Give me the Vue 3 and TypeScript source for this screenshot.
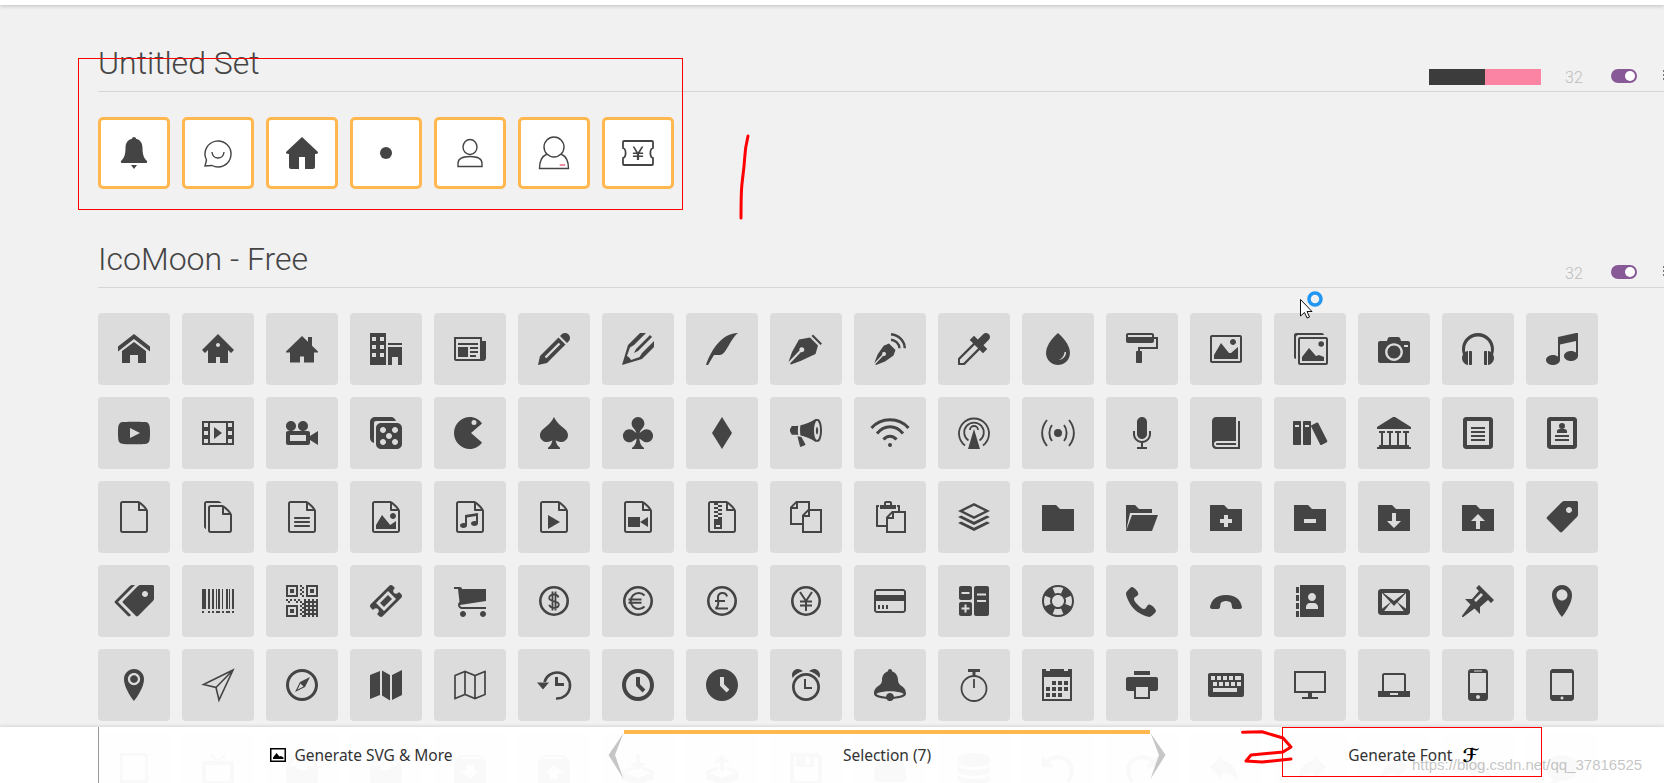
<script setup lang="ts">
interface Ico {
  f?: string
  s?: string
  w?: number
}

const F = (f: string, s?: string, w?: number): Ico => ({ f, s, w })
const S = (s: string, w = 2): Ico => ({ s, w })

const sheet =
  'M28.681 7.159c-0.694-0.947-1.662-2.053-2.724-3.116s-2.169-2.030-3.116-2.724c-1.612-1.182-2.393-1.319-2.841-1.319h-15.5c-1.378 0-2.5 1.121-2.5 2.5v27c0 1.378 1.122 2.5 2.5 2.5h23c1.378 0 2.5-1.122 2.5-2.5v-19.5c0-0.448-0.137-1.23-1.319-2.841zM24.543 5.457c0.959 0.959 1.712 1.825 2.268 2.543h-4.811v-4.811c0.718 0.556 1.584 1.309 2.543 2.268zM28 29.5c0 0.271-0.229 0.5-0.5 0.5h-23c-0.271 0-0.5-0.229-0.5-0.5v-27c0-0.271 0.229-0.5 0.5-0.5 0 0 15.499-0 15.5 0v7c0 0.552 0.448 1 1 1h7v19.5z '
const tab = 'M18 8l-4-4h-14v26h32v-22h-14z'
const coin = 'M16 1a15 15 0 1 0 0 30a15 15 0 1 0 0-30z M16 3.6a12.4 12.4 0 1 1 0 24.8a12.4 12.4 0 1 1 0-24.8z'
const frame = 'M28 0h-24c-1.65 0-3 1.35-3 3v26c0 1.65 1.35 3 3 3h24c1.65 0 3-1.35 3-3v-26c0-1.65-1.35-3-3-3zM27 28h-22v-24h22v24z'

// bottom right block of the qr code is just a checker
let checker = ''
for (let y = 14; y < 32; y += 2) {
  for (let x = 18; x < 32; x += 2) {
    if ((x + y) % 4 === 0 || y % 4 === 0) checker += `M${x} ${y}h2v2h-2z`
  }
}

const selected: Ico[] = [
  F('M16 0c1 0 2 0.8 2 1.8 4 0.8 6.5 4.2 6.5 9.2 0 7 1.5 10 4 12.5 1 1 1 2.500-0.5 2.500h-24c-1.500 0-1.500-1.500-0.500-2.500 2.500-2.500 4-5.500 4-12.500 0-5 2.500-8.400 6.500-9.200 0-1 1-1.800 2-1.800z M13 28h6l-3 4z'),
  S('M3 29l1.5-6a13 13 0 1 1 5.5 5.5z M10 15c0.5 8 11.500 8 12 0', 1.4),
  F('M16 0l16 15c0.3 1-1 2-2 2h-1v13c0 1-1 2-2 2h-8v-12h-6v12h-8c-1 0-2-1-2-2v-13h-1c-1 0-2.3-1-2-2z'),
  F('M16 10a6 6 0 1 0 0 12a6 6 0 1 0 0-12z'),
  S('M9 10a7 7.5 0 1 0 14 0a7 7.5 0 1 0-14 0z M4 29.500v-3c0-4 4-7 12-7s12 3 12 7v3z', 1.4),
  S('M6 10a10 10 0 1 0 20 0a10 10 0 1 0-20 0z M9 17c-4.500 2-7.500 6-7.500 14.500h29c0-8.500-3-12.500-7.500-14.500', 1.4),
  { f: 'M14.900 23v-3h-4v-1.500h4v-1.500h-4v-1.500h3.200l-3.500-6h1.800l3.600 5.800 3.600-5.800h1.800l-3.500 6h3.200v1.500h-4v1.500h4v1.500h-4v3z', s: 'M2 4h28c0.500 0 1 0.500 1 1v6c-3.500 1-3.500 9 0 10v6c0 0.500-0.500 1-1 1h-28c-0.500 0-1-0.500-1-1v-6c3.500-1 3.500-9 0-10v-6c0-0.500 0.500-1 1-1z', w: 1.8 }
]

const free: Ico[] = [
  // row 1
  F('M32 18.451l-16-12.42-16 12.42v-5.064l16-12.42 16 12.42zM28 18v12h-8v-8h-8v8h-8v-12l12-9z'),
  F('M16 1l-16 16 3 3 3-3v13h8v-6h4v6h8v-13l3 3 3-3-16-16zM16 14c-1.105 0-2-0.895-2-2s0.895-2 2-2c1.105 0 2 0.895 2 2s-0.895 2-2 2z'),
  F('M32 18.451l-6-5.819v-8.632h-4v4.753l-6-5.818-16 15.516v0.97h4v10h10v-6h4v6h10v-10h4z'),
  F('M0 32h16v-32h-16v32zM10 4h4v4h-4v-4zM10 12h4v4h-4v-4zM10 20h4v4h-4v-4zM2 4h4v4h-4v-4zM2 12h4v4h-4v-4zM2 20h4v4h-4v-4zM18 10h14v2h-14zM18 32h4v-8h6v8h4v-18h-14z'),
  F('M28 8v-4h-28v22c0 1.105 0.895 2 2 2h27c1.657 0 3-1.343 3-3v-17h-4zM26 26h-24v-20h24v20zM4 10h20v2h-20zM16 14h8v2h-8zM16 18h8v2h-8zM16 22h6v2h-6zM4 14h10v10h-10z'),
  F('M27 0c2.761 0 5 2.239 5 5 0 1.126-0.372 2.164-1 3l-2 2-7-7 2-2c0.836-0.628 1.874-1 3-1zM2 23l-2 9 9-2 18.5-18.5-7-7-18.5 18.5zM22.362 11.362l-14 14-1.724-1.724 14-14 1.724 1.724z'),
  F('M12 20l4-2 14-14-2-2-14 14-2 4zM9.041 27.097c-0.989-2.085-2.052-3.149-4.137-4.137l3.097-8.525 4-2.435 12-12h-6l-12 12-6 20 20-6 12-12v-6l-12 12-2.435 4z'),
  F('M0 32c4-12 14.469-32 32-32-8.219 6.594-12 22-18 22s-6 0-6 0l-6 10h-2z'),
  F('M23 1.500l9 9-1.500 1.500-9-9z M20 4.500l8 8-2.500 8.500-15 7-9.500 3.500-1-1 11-11.500a2.500 2.500 0 1 0-1.500-1.500l-11 11.500 3.500-10 7-12.500z'),
  F('M15 10.500l6.500 6.500-2 5.500-8.500 6-9 3.500-0.800-0.800 8-8.500a2 2 0 1 0-1-1l-8 8.500 3.500-9 6-8.500z', 'M17 1.200c7.500 0.500 13.500 6.500 13.800 14 M17 6.800c4.500 0.300 8.200 4 8.400 8.400', 2.4),
  F('M30.828 1.172c-1.562-1.562-4.095-1.562-5.657 0l-5.379 5.379-3.793-3.793-4.243 4.243 3.326 3.326-14.754 14.754c-0.252 0.252-0.358 0.592-0.322 0.921h-0.008v5c0 0.552 0.448 1 1 1h5c0 0 0.083 0 0.125 0 0.288 0 0.576-0.11 0.795-0.329l14.754-14.754 3.326 3.326 4.243-4.243-3.793-3.793 5.379-5.379c1.562-1.562 1.562-4.095 0-5.657zM5.409 30h-3.409v-3.409l14.674-14.674 3.409 3.409-14.674 14.674z'),
  F('M27.020 14.786c-2.055-5.732-6.41-10.88-11.020-14.786-4.61 3.907-8.965 9.054-11.020 14.786-1.271 3.545-1.396 7.393 0.393 10.794 2.058 3.911 6.261 6.42 10.627 6.42s8.569-2.509 10.627-6.42c1.79-3.401 1.664-7.249 0.393-10.794z M24 19c0.500 4-3.500 8-7.500 8 3-1 5.800-4 6-8z'),
  F('M30 4h-2v-2c0-1.1-0.9-2-2-2h-24c-1.1 0-2 0.9-2 2v6c0 1.1 0.9 2 2 2h24c1.1 0 2-0.9 2-2v-2h2v8h-18v4h-1c-0.552 0-1 0.448-1 1v10c0 0.552 0.448 1 1 1h4c0.552 0 1-0.448 1-1v-10c0-0.552-0.448-1-1-1h-1v-2h18v-12h-2zM26 4h-24v-2h24v2z'),
  F('M29.996 4c0.001 0.001 0.003 0.002 0.004 0.004v23.993c-0.001 0.001-0.002 0.003-0.004 0.004h-27.993c-0.001-0.001-0.003-0.002-0.004-0.004v-23.993c0.001-0.001 0.002-0.003 0.004-0.004h27.993zM30 2h-28c-1.1 0-2 0.9-2 2v24c0 1.1 0.9 2 2 2h28c1.1 0 2-0.9 2-2v-24c0-1.1-0.9-2-2-2z M26 9c0 1.657-1.343 3-3 3s-3-1.343-3-3 1.343-3 3-3 3 1.343 3 3z M28 26h-24v-4l7-12 8 10h2l7-6z'),
  F('M6 4h26c1 0 2 1 2 2v24c0 1-1 2-2 2h-26c-1 0-2-1-2-2v-24c0-1 1-2 2-2z M6 6v24h26v-24z M8 28v-4l7-9 7 8 3-1 5 2v4z M30 11a2.800 2.800 0 1 1-5.600 0a2.800 2.800 0 1 1 5.600 0z M0 2c0-1 1-2 2-2h26c1 0 2 1 2 2h-26c-1 0-2 1-2 2v22c-1 0-2-1-2-2z'),
  F('M9.5 19c0 3.59 2.91 6.5 6.5 6.5s6.5-2.91 6.5-6.5-2.91-6.5-6.5-6.5-6.5 2.91-6.5 6.5zM30 8h-7c-0.5-2-1-4-3-4h-8c-2 0-2.5 2-3 4h-7c-1.1 0-2 0.9-2 2v18c0 1.1 0.9 2 2 2h28c1.1 0 2-0.9 2-2v-18c0-1.1-0.9-2-2-2zM16 27.875c-4.902 0-8.875-3.973-8.875-8.875s3.973-8.875 8.875-8.875c4.902 0 8.875 3.973 8.875 8.875s-3.973 8.875-8.875 8.875zM30 14h-4v-2h4v2z'),
  F('M9 18h-2v14h2c0.55 0 1-0.45 1-1v-12c0-0.55-0.45-1-1-1z M23 18c-0.55 0-1 0.45-1 1v12c0 0.55 0.45 1 1 1h2v-14h-2z M32 16c0-8.837-7.163-16-16-16s-16 7.163-16 16c0 1.919 0.338 3.759 0.958 5.464-0.609 1.038-0.958 2.246-0.958 3.536 0 3.526 2.608 6.443 6 6.929v-13.857c-0.997 0.143-1.927 0.495-2.742 1.012-0.168-0.835-0.258-1.699-0.258-2.584 0-7.18 5.82-13 13-13s13 5.82 13 13c0 0.885-0.088 1.749-0.257 2.584-0.816-0.517-1.745-0.87-2.743-1.013v13.858c3.392-0.485 6-3.402 6-6.929 0-1.29-0.349-2.498-0.958-3.536 0.62-1.705 0.958-3.545 0.958-5.464z'),
  F('M30 0h2v23c0 2.761-3.134 5-7 5s-7-2.239-7-5c0-2.761 3.134-5 7-5 1.959 0 3.729 0.575 5 1.501v-11.501l-16 3.556v15.444c0 2.761-3.134 5-7 5s-7-2.239-7-5c0-2.761 3.134-5 7-5 1.959 0 3.729 0.575 5 1.501v-19.501l18-4z'),
  // row 2
  F('M31.681 9.6c0 0-0.313-2.206-1.275-3.175-1.219-1.275-2.581-1.281-3.206-1.356-4.475-0.325-11.194-0.325-11.194-0.325h-0.012c0 0-6.719 0-11.194 0.325-0.625 0.075-1.987 0.081-3.206 1.356-0.963 0.969-1.269 3.175-1.269 3.175s-0.319 2.588-0.319 5.181v2.425c0 2.587 0.319 5.181 0.319 5.181s0.313 2.206 1.269 3.175c1.219 1.275 2.819 1.231 3.531 1.369 2.563 0.244 10.881 0.319 10.881 0.319s6.725-0.012 11.2-0.331c0.625-0.075 1.988-0.081 3.206-1.356 0.962-0.969 1.275-3.175 1.275-3.175s0.319-2.587 0.319-5.181v-2.425c-0.006-2.588-0.325-5.181-0.325-5.181zM12 21v-10l10 5z'),
  F('M0 4v24h32v-24h-32zM6 26h-4v-4h4v4zM6 18h-4v-4h4v4zM6 10h-4v-4h4v4zM24 26h-16v-20h16v20zM30 26h-4v-4h4v4zM30 18h-4v-4h4v4zM30 10h-4v-4h4v4zM12 10v12l8-6z'),
  F('M12 9c0-2.761 2.239-5 5-5s5 2.239 5 5c0 2.761-2.239 5-5 5s-5-2.239-5-5zM0 9c0-2.761 2.239-5 5-5s5 2.239 5 5c0 2.761-2.239 5-5 5s-5-2.239-5-5zM24 19v-3c0-1.1-0.9-2-2-2h-20c-1.1 0-2 0.9-2 2v10c0 1.1 0.9 2 2 2h20c1.1 0 2-0.9 2-2v-3l8 5v-14l-8 5zM20 24h-16v-6h16v6z'),
  F('M27 6h-16c-2.75 0-5 2.25-5 5v16c0 2.75 2.25 5 5 5h16c2.75 0 5-2.25 5-5v-16c0-2.75-2.25-5-5-5zM13 28c-1.657 0-3-1.343-3-3s1.343-3 3-3 3 1.343 3 3-1.343 3-3 3zM13 16c-1.657 0-3-1.343-3-3s1.343-3 3-3 3 1.343 3 3-1.343 3-3 3zM19 22c-1.657 0-3-1.343-3-3s1.343-3 3-3 3 1.343 3 3-1.343 3-3 3zM25 28c-1.657 0-3-1.343-3-3s1.343-3 3-3 3 1.343 3 3-1.343 3-3 3zM25 16c-1.657 0-3-1.343-3-3s1.343-3 3-3 3 1.343 3 3-1.343 3-3 3zM25.899 4c-0.467-2.275-2.491-4-4.899-4h-16c-2.75 0-5 2.25-5 5v16c0 2.408 1.725 4.432 4 4.899v-19.899c0-1.1 0.9-2 2-2h19.899z'),
  F('M28 6.500c-2.700-3.900-7.300-6.500-12-6.500-8.800 0-16 7.200-16 16s7.200 16 16 16c4.700 0 9.300-2.600 12-6.500l-11-9.500z M20 3a2.500 2.500 0 1 1 0 5a2.500 2.500 0 1 1 0-5z'),
  F('M25.549 10.88c-6.049-4.496-8.133-8.094-9.549-10.88-1.415 2.785-3.5 6.384-9.549 10.88-10.314 7.665-0.606 18.365 7.93 12.476-0.556 3.654-2.454 6.318-4.381 7.465v1.179h12.001v-1.179c-1.928-1.147-3.825-3.811-4.382-7.465 8.535 5.889 18.244-4.811 7.93-12.476z'),
  F('M24.588 12.274c-1.845 0-3.503 0.769-4.683 2.022-0.5 0.531-1.368 1.16-2.306 1.713 0.441-1.683 1.834-3.803 2.801-4.733 1.239-1.193 2-2.87 2-4.734 0-3.59-2.859-6.503-6.4-6.541-3.541 0.038-6.4 2.951-6.4 6.541 0 1.865 0.761 3.542 2 4.734 0.967 0.93 2.36 3.050 2.801 4.733-0.939-0.553-1.806-1.182-2.306-1.713-1.18-1.253-2.838-2.022-4.683-2.022-3.575 0-6.471 2.927-6.471 6.541s2.897 6.542 6.471 6.542c1.845 0 3.503-0.792 4.683-2.045 0.525-0.558 1.451-1.254 2.447-1.832-0.094 4.615-2.298 8.005-4.541 9.341v1.179h12v-1.179c-2.244-1.336-4.448-4.726-4.541-9.341 0.995 0.578 1.922 1.274 2.447 1.832 1.18 1.253 2.838 2.045 4.683 2.045 3.575 0 6.471-2.928 6.471-6.542s-2.897-6.541-6.471-6.541z'),
  F('M16 0l-10 16 10 16 10-16z'),
  F('M32 13.414c0-6.279-1.837-11.373-4.109-11.413h-2.565c0 0-6.088 4.573-14.851 6.367-0.268 1.415-0.438 3.102-0.438 5.047s0.171 3.631 0.438 5.047c8.763 1.794 14.851 6.367 14.851 6.367h2.565c2.272-0.040 4.109-5.134 4.109-11.413zM27.026 23.102c-0.293 0-0.61-0.304-0.773-0.486-0.395-0.439-0.775-1.124-1.1-1.979-0.727-1.913-1.127-4.478-1.127-7.223s0.4-5.309 1.127-7.223c0.325-0.855 0.705-1.54 1.1-1.979 0.163-0.182 0.48-0.486 0.773-0.486s0.61 0.304 0.773 0.486c0.395 0.439 0.775 1.124 1.1 1.979 0.727 1.913 1.127 4.479 1.127 7.223s-0.4 5.309-1.127 7.223c-0.325 0.855-0.705 1.54-1.1 1.979-0.163 0.182-0.48 0.486-0.773 0.486z M7.869 13.414c0-1.623 0.119-3.201 0.345-4.659-1.478 0.205-2.77 0.317-4.341 0.317h-2.05l-1.823 3.141v2.402l1.823 3.141h2.05c1.571 0 2.863 0.113 4.341 0.317-0.226-1.458-0.345-3.036-0.345-4.659z M11.42 19.962l-4-0.766 2.558 10.048c0.132 0.52 0.648 0.782 1.146 0.583l3.705-1.483c0.498-0.199 0.698-0.749 0.444-1.221l-3.853-7.161z M27.026 17.485c-0.113 0-0.235-0.117-0.298-0.187-0.152-0.169-0.299-0.433-0.424-0.763-0.28-0.738-0.434-1.726-0.434-2.784s0.154-2.046 0.434-2.784c0.125-0.33 0.272-0.593 0.424-0.763 0.063-0.070 0.185-0.187 0.298-0.187s0.235 0.117 0.298 0.187c0.152 0.169 0.299 0.433 0.424 0.763 0.28 0.737 0.434 1.726 0.434 2.784s-0.154 2.046-0.434 2.784c-0.125 0.33-0.272 0.593-0.424 0.763-0.063 0.070-0.185 0.187-0.298 0.187z'),
  F('M16 26a2 2 0 1 1 0 4a2 2 0 1 1 0-4z', 'M-2.500 11c9.500-11 27.500-11 37 0 M3 16.500c7.500-9 18.500-9 26 0 M9.500 22.500c3.500-4.500 9.500-4.500 13 0', 3),
  F('M16 12l6 20h-12z', 'M7 28.500a15 15 0 1 1 18 0 M10.500 23.500a9.800 9.800 0 1 1 11 0 M12 13a4 4 0 1 1 8 0', 1.8),
  F('M16 12a4 4 0 1 1 0 8a4 4 0 1 1 0-8z', 'M10 8c-3.500 4.500-3.500 11.500 0 16 M22 8c3.500 4.500 3.500 11.500 0 16 M5 3c-6.500 8-6.500 18 0 26 M27 3c6.500 8 6.500 18 0 26', 1.9),
  F('M16 22c2.761 0 5-2.239 5-5v-12c0-2.761-2.239-5-5-5s-5 2.239-5 5v12c0 2.761 2.239 5 5 5zM23 14v3c0 3.866-3.134 7-7 7s-7-3.134-7-7v-3h-2v3c0 4.632 3.5 8.447 8 8.944v4.056h-4v2h10v-2h-4v-4.056c4.5-0.497 8-4.312 8-8.944v-3h-2z'),
  F('M28 4v26h-21c-1.657 0-3-1.343-3-3s1.343-3 3-3h19v-24h-20c-2.2 0-4 1.8-4 4v24c0 2.2 1.8 4 4 4h24v-28h-2z M7 26c-0.552 0-1 0.448-1 1s0.448 1 1 1h19v-2z'),
  F('M6 4h-6c-0.55 0-1 0.45-1 1v22c0 0.55 0.45 1 1 1h6c0.55 0 1-0.45 1-1v-22c0-0.55-0.45-1-1-1zM5 10h-4v-2h4v2z M16 4h-6c-0.55 0-1 0.45-1 1v22c0 0.55 0.45 1 1 1h6c0.55 0 1-0.45 1-1v-22c0-0.55-0.45-1-1-1zM15 10h-4v-2h4v2z M22.909 5.546l-5.358 2.7c-0.491 0.247-0.691 0.852-0.443 1.343l8.999 17.861c0.247 0.491 0.852 0.691 1.343 0.443l5.358-2.7c0.491-0.247 0.691-0.852 0.443-1.343l-8.999-17.861c-0.247-0.491-0.852-0.691-1.343-0.443z'),
  F('M31 30v-2h-2v-12h2v-2h-6v2h2v12h-6v-12h2v-2h-6v2h2v12h-6v-12h2v-2h-6v2h2v12h-6v-12h2v-2h-6v2h2v12h-2v2h-2v2h34v-2h-2z M15 0h2l16 10v2h-34v-2z'),
  F(frame + ' M9 10h14v2h-14z M9 14h14v2h-14z M9 18h14v2h-14z M9 22h14v2h-14z'),
  F(frame + ' M9 18h14v2h-14z M9 22h14v2h-14z M13 9a3 3 0 1 1 6 0a3 3 0 1 1-6 0z M14 12h4c1.650 0 3 0.900 3 2v2h-10v-2c0-1.100 1.350-2 3-2z'),
  // row 3
  F(sheet),
  F('M28.681 11.159c-0.694-0.947-1.662-2.053-2.724-3.116s-2.169-2.030-3.116-2.724c-1.612-1.182-2.393-1.319-2.841-1.319h-11.5c-1.378 0-2.5 1.121-2.5 2.5v23c0 1.378 1.121 2.5 2.5 2.5h19c1.378 0 2.5-1.122 2.5-2.5v-15.5c0-0.448-0.137-1.23-1.319-2.841zM24.543 9.457c0.959 0.959 1.712 1.825 2.268 2.543h-4.811v-4.811c0.718 0.556 1.584 1.309 2.543 2.268zM28 29.5c0 0.271-0.229 0.5-0.5 0.5h-19c-0.271 0-0.5-0.229-0.5-0.5v-23c0-0.271 0.229-0.5 0.5-0.5 0 0 11.499-0 11.5 0v7c0 0.552 0.448 1 1 1h7v15.5z M18.841 1.319c-1.612-1.182-2.393-1.319-2.841-1.319h-11.5c-1.378 0-2.5 1.121-2.5 2.5v23c0 1.207 0.86 2.217 2 2.45v-25.45c0-0.271 0.229-0.5 0.5-0.5h15.215c-0.301-0.248-0.595-0.477-0.873-0.681z'),
  F(sheet + 'M9 16h14c0.552 0 1 0.448 1 1s-0.448 1-1 1h-14c-0.552 0-1-0.448-1-1s0.448-1 1-1z M9 20h14c0.552 0 1 0.448 1 1s-0.448 1-1 1h-14c-0.552 0-1-0.448-1-1s0.448-1 1-1z M9 24h14c0.552 0 1 0.448 1 1s-0.448 1-1 1h-14c-0.552 0-1-0.448-1-1s0.448-1 1-1z'),
  F(sheet + 'M26 28h-20v-4l6-10 8.219 10 5.781-4v8z M26 15c0 1.657-1.343 3-3 3s-3-1.343-3-3 1.343-3 3-3c1.657 0 3 1.343 3 3z'),
  F(sheet + 'M24 12v10.500c0 1.400-1.600 2.500-3.500 2.500s-3.500-1.100-3.500-2.500 1.600-2.500 3.500-2.500c0.500 0 1 0.100 1.500 0.200v-5.200l-9 1.600v7.900c0 1.400-1.600 2.500-3.500 2.500s-3.500-1.100-3.500-2.500 1.600-2.500 3.500-2.500c0.500 0 1 0.100 1.500 0.200v-8.200z'),
  F(sheet + 'M10 14l12 7-12 7z'),
  F(sheet + 'M6 16h12v10h-12z M18 21l8-5v10z'),
  F(sheet + 'M8 2h4v2h-4z M12 4h4v2h-4z M8 6h4v2h-4z M12 8h4v2h-4z M8 10h4v2h-4z M12 12h4v2h-4z M8 14h4v2h-4z M12 16h4v2h-4z M8 18h8v10h-8z M10 24h4v2h-4z'),
  F('M20 8v-8h-14l-6 6v18h12v8h20v-24h-12zM6 2.828v3.172h-3.172l3.172-3.172zM2 22v-14h6v-6h10v6l-6 6v8h-10zM18 10.828v3.172h-3.172l3.172-3.172zM30 30h-16v-14h6v-6h10v20z'),
  F('M22 4h-4v-2c0-1.1-0.9-2-2-2h-4c-1.1 0-2 0.9-2 2v2h-4v4h16v-4zM16 4h-4v-2h4v2z M26 10v-5c0-0.55-0.45-1-1-1h-2v2h1v4h-6l-6 6v8h-8v-18h1v-2h-2c-0.55 0-1 0.45-1 1v20c0 0.55 0.45 1 1 1h9v6h20v-22h-6zM18 12.828v3.172h-3.172l3.172-3.172zM30 30h-16v-12h6v-6h10v18z'),
  F('M32 10l-16-8-16 8 16 8 16-8zM16 4.655l10.689 5.345-10.689 5.345-10.689-5.345 10.689-5.345zM28.795 14.398l3.205 1.602-16 8-16-8 3.205-1.602 12.795 6.398zM28.795 20.398l3.205 1.602-16 8-16-8 3.205-1.602 12.795 6.398z'),
  F('M14 4l4 4h14v22h-32v-26z'),
  F('M26 30l6-16h-26l-6 16zM4 12l-4 18v-26h9l4 4h13v4z'),
  F(tab + 'M22 22h-4v4h-4v-4h-4v-4h4v-4h4v4h4v4z'),
  F(tab + 'M22 22h-12v-4h12v4z'),
  F(tab + 'M16 27l-7-7h5v-8h4v8h5l-7 7z'),
  F(tab + 'M16 13l7 7h-5v8h-4v-8h-5l7-7z'),
  F('M30.5 0h-12c-0.825 0-1.977 0.477-2.561 1.061l-14.879 14.879c-0.583 0.583-0.583 1.538 0 2.121l12.879 12.879c0.583 0.583 1.538 0.583 2.121 0l14.879-14.879c0.583-0.583 1.061-1.736 1.061-2.561v-12c0-0.825-0.675-1.5-1.5-1.5zM23 12c-1.657 0-3-1.343-3-3s1.343-3 3-3 3 1.343 3 3-1.343 3-3 3z'),
  // row 4
  F('M34.500 0h-12c-0.825 0-1.977 0.477-2.561 1.061l-14.879 14.879c-0.583 0.583-0.583 1.538 0 2.121l12.879 12.879c0.583 0.583 1.538 0.583 2.121 0l14.879-14.879c0.583-0.583 1.061-1.736 1.061-2.561v-12c0-0.825-0.675-1.5-1.5-1.5zM27 12c-1.657 0-3-1.343-3-3s1.343-3 3-3 3 1.343 3 3-1.343 3-3 3z M0 17l17-17h-2.500c-0.825 0-1.977 0.477-2.561 1.061l-14.879 14.879c-0.583 0.583-0.583 1.538 0 2.121l12.879 12.879c0.583 0.583 1.538 0.583 2.121 0l0.939-0.939-13-13z'),
  F('M0 4h4v20h-4zM6 4h2v20h-2zM10 4h2v20h-2zM16 4h2v20h-2zM24 4h2v20h-2zM30 4h2v20h-2zM20 4h1v20h-1zM14 4h1v20h-1zM27 4h1v20h-1zM0 26h2v2h-2zM6 26h2v2h-2zM10 26h2v2h-2zM20 26h2v2h-2zM30 26h2v2h-2zM24 26h4v2h-4zM14 26h4v2h-4z'),
  F('M0 0h12v12h-12z M2 2h8v8h-8z M4 4h4v4h-4z M20 0h12v12h-12z M22 2h8v8h-8z M24 4h4v4h-4z M0 20h12v12h-12z M2 22h8v8h-8z M4 24h4v4h-4z M14 0h2v2h-2z M16 2h2v2h-2z M14 4h2v2h-2z M16 6h2v2h-2z M14 8h2v2h-2z M16 10h2v2h-2z M0 14h2v2h-2z M4 14h2v2h-2z M8 14h2v2h-2z M12 14h2v2h-2z M2 16h2v2h-2z M10 16h2v2h-2z M14 16h2v2h-2z M16 18h2v2h-2z M14 20h2v2h-2z M16 22h2v2h-2z M14 24h2v2h-2z M16 26h2v2h-2z M14 28h2v2h-2z M16 30h2v2h-2z' + checker),
  F('M18 10l4 4-8 8-4-4zM31.298 9.297l-2.297-2.297-1 1c-0.512 0.512-1.219 0.828-2 0.828-1.562 0-2.829-1.266-2.829-2.828 0-0.781 0.317-1.489 0.829-2.001l1-1-2.297-2.297c-0.936-0.936-2.468-0.936-3.404 0l-18.596 18.596c-0.936 0.936-0.936 2.468 0 3.404l2.297 2.297 1-1c0.512-0.512 1.219-0.828 2-0.828 1.562 0 2.829 1.266 2.829 2.828 0 0.781-0.317 1.489-0.829 2.001l-1 1 2.297 2.297c0.936 0.936 2.468 0.936 3.404 0l18.596-18.596c0.936-0.936 0.936-2.468 0-3.404zM14 26l-8-8 12-12 8 8-12 12z'),
  F('M12 29c0 1.657-1.343 3-3 3s-3-1.343-3-3 1.343-3 3-3 3 1.343 3 3z M32 29c0 1.657-1.343 3-3 3s-3-1.343-3-3 1.343-3 3-3 3 1.343 3 3z M32 16v-12h-24c0-1.105-0.895-2-2-2h-6v2h4l1.502 12.877c-0.915 0.733-1.502 1.859-1.502 3.123 0 2.209 1.791 4 4 4h24v-2h-24c-1.105 0-2-0.895-2-2l26-4z'),
  F(coin, 'M20.500 12.500c-0.500-2-2.500-3-4.500-3s-4.800 1-4.800 3.500c0 4.500 9.600 2.500 9.600 6.500 0 2.500-2.800 3.300-4.800 3.300s-4.200-1-4.800-3 M14.500 6.500v19 M17.500 6.500v19', 1.8),
  F(coin, 'M22.500 10.500a8 8 0 1 0 0 11 M6.500 14.500h13 M6.500 17.800h13', 2),
  F(coin, 'M21 11.500c-0.500-2.500-2.500-3.500-4.500-3.500-3 0-4.500 2-4.500 4.500 0 3 0.700 5.500 0 7.500-0.400 1.500-1.500 3-2.500 3.500h12.500 M9 16h10', 2),
  F(coin, 'M10 7l6 9 6-9 M16 16v10 M10 16.500h12 M10 20.500h12', 2),
  F('M29 4h-26c-1.65 0-3 1.35-3 3v18c0 1.65 1.35 3 3 3h26c1.65 0 3-1.35 3-3v-18c0-1.65-1.35-3-3-3zM3 6h26c0.542 0 1 0.458 1 1v3h-28v-3c0-0.542 0.458-1 1-1zM29 26h-26c-0.542 0-1-0.458-1-1v-9h28v9c0 0.542-0.458 1-1 1zM4 20h2v4h-2zM8 20h2v4h-2zM12 20h2v4h-2z'),
  F('M3 1h9c1.100 0 2 0.900 2 2v10c0 1.100-0.900 2-2 2h-9c-1.100 0-2-0.900-2-2v-10c0-1.100 0.900-2 2-2z M3.500 7v2h8v-2z M3 17h9c1.100 0 2 0.900 2 2v10c0 1.100-0.900 2-2 2h-9c-1.100 0-2-0.900-2-2v-10c0-1.100 0.900-2 2-2z M6.500 19.500v3h-3v2h3v3h2v-3h3v-2h-3v-3z M18 1h11c1.100 0 2 0.900 2 2v26c0 1.100-0.900 2-2 2h-11c-1.100 0-2-0.900-2-2v-26c0-1.100 0.900-2 2-2z M19 8.500v2h9v-2z M19 15v2h9v-2z'),
  F('M16 0c-8.837 0-16 7.163-16 16s7.163 16 16 16 16-7.163 16-16-7.163-16-16-16zM10 16c0-3.314 2.686-6 6-6s6 2.686 6 6-2.686 6-6 6-6-2.686-6-6zM28.937 21.359l-5.544-2.297c0.391-0.943 0.608-1.977 0.608-3.062s-0.216-2.119-0.608-3.062l5.544-2.297c0.685 1.651 1.063 3.46 1.063 5.359s-0.379 3.708-1.063 5.359zM21.359 3.063l-2.297 5.544c-0.943-0.391-1.977-0.608-3.062-0.608s-2.119 0.216-3.062 0.608l-2.297-5.544c1.651-0.684 3.46-1.063 5.359-1.063s3.708 0.379 5.359 1.063zM3.063 10.641l5.544 2.297c-0.391 0.943-0.608 1.977-0.608 3.062s0.216 2.119 0.608 3.062l-5.544 2.297c-0.684-1.651-1.063-3.46-1.063-5.359s0.379-3.708 1.063-5.359zM10.641 28.937l2.297-5.544c0.943 0.391 1.977 0.608 3.062 0.608s2.119-0.216 3.062-0.608l2.297 5.544c-1.651 0.684-3.46 1.063-5.359 1.063s-3.708-0.379-5.359-1.063z'),
  F('M22 20c-2 2-2 4-4 4s-4-2-6-4-4-4-4-6 2-2 4-4-4-8-6-8-6 6-6 6c0 4 4.109 12.109 8 16s12 8 16 8c0 0 6-4 6-6s-6-8-8-6z'),
  F('M32 22c0 0-1-5-4-8-3-2.500-7-4-12-4s-9 1.500-12 4c-3 3-4 8-4 8 0 1 1 2 2 2h6c1 0 2-1 2-2l0.500-3c0.100-1 1-2 2-2.300 1.500-0.500 2.500-0.700 3.500-0.700s2 0.200 3.500 0.700c1 0.300 1.900 1.300 2 2.300l0.500 3c0 1 1 2 2 2h6c1 0 2-1 2-2z'),
  F('M6 0v32h24v-32h-24zM18 8.010c2.203 0 3.99 1.786 3.99 3.99s-1.786 3.99-3.99 3.99-3.99-1.786-3.99-3.99 1.786-3.99 3.99-3.99zM24 24h-12v-2c0-2.209 1.791-4 4-4h4c2.209 0 4 1.791 4 4v2z M2 2h3v6h-3v-6z M2 10h3v6h-3v-6z M2 18h3v6h-3v-6z M2 26h3v6h-3v-6z'),
  F('M29 4h-26c-1.65 0-3 1.35-3 3v20c0 1.65 1.35 3 3 3h26c1.65 0 3-1.35 3-3v-20c0-1.65-1.35-3-3-3zM12.461 17.199l-8.461 6.59v-15.676l8.461 9.086zM5.512 8h20.976l-10.488 7.875-10.488-7.875zM12.79 17.553l3.21 3.447 3.21-3.447 6.58 8.447h-19.58l6.58-8.447zM19.539 17.199l8.461-9.086v15.676l-8.461-6.59z'),
  F('M17 0l-3 3 3 3-7 8h-7l5.5 5.5-8.5 11.269v1.231h1.231l11.269-8.5 5.5 5.5v-7l8-7 3 3 3-3-15-15zM14 17l-2-2 7-7 2 2-7 7z'),
  F('M16 0c-5.523 0-10 4.477-10 10 0 10 10 22 10 22s10-12 10-22c0-5.523-4.477-10-10-10zM16 15.500c-3.038 0-5.500-2.462-5.500-5.500s2.462-5.500 5.500-5.500 5.500 2.462 5.500 5.500-2.462 5.500-5.500 5.500z'),
  // row 5
  F('M16 0c-5.523 0-10 4.477-10 10 0 10 10 22 10 22s10-12 10-22c0-5.523-4.477-10-10-10zM16 16.125c-3.383 0-6.125-2.742-6.125-6.125s2.742-6.125 6.125-6.125 6.125 2.742 6.125 6.125-2.742 6.125-6.125 6.125zM12.125 10c0-2.14 1.735-3.875 3.875-3.875s3.875 1.735 3.875 3.875c0 2.14-1.735 3.875-3.875 3.875s-3.875-1.735-3.875-3.875z'),
  S('M31 1l-29.500 14.500 12.500 3 3 12.500z M31 1l-17 17.500', 1.6),
  F('M16 0c-8.837 0-16 7.163-16 16s7.163 16 16 16 16-7.163 16-16-7.163-16-16-16zM16 29c-7.18 0-13-5.82-13-13s5.82-13 13-13 13 5.82 13 13-5.82 13-13 13z M9 23l5-10 10-5-5 10zM14.500 14.500l-3 6 6-3z'),
  F('M0 6l10-4v24l-10 4z M12 1.500l8 4.500v25.500l-8-5z M22 6l10-5v25l-10 5z'),
  S('M1 6.500l10-4 10 4 10-4v23l-10 4-10-4-10 4z M11 2.500v23 M21 6.500v23', 1.7),
  F('M-1 13.500h12l-6 7z M17 8h3v6h6v3h-9z', 'M6.500 13a13 13 0 1 1 11.500 16.500', 2.6),
  F('M20.586 23.414l-6.586-6.586v-8.828h4v7.172l5.414 5.414zM16 0c-8.837 0-16 7.163-16 16s7.163 16 16 16 16-7.163 16-16-7.163-16-16-16zM16 28c-6.627 0-12-5.373-12-12s5.373-12 12-12c6.627 0 12 5.373 12 12s-5.373 12-12 12z'),
  F('M16 0c-8.837 0-16 7.163-16 16s7.163 16 16 16 16-7.163 16-16-7.163-16-16-16zM20.586 23.414l-6.586-6.586v-8.828h4v7.172l5.414 5.414-2.829 2.829z'),
  F('M16 4c-7.732 0-14 6.268-14 14s6.268 14 14 14 14-6.268 14-14-6.268-14-14-14zM16 29.25c-6.213 0-11.25-5.037-11.25-11.25s5.037-11.25 11.25-11.25c6.213 0 11.25 5.037 11.25 11.25s-5.037 11.25-11.25 11.25zM29.212 8.974c0.501-0.877 0.788-1.892 0.788-2.974 0-3.314-2.686-6-6-6-1.932 0-3.65 0.913-4.747 2.331 4.121 0.851 7.663 3.287 9.96 6.643zM12.748 2.331c-1.097-1.418-2.816-2.331-4.748-2.331-3.314 0-6 2.686-6 6 0 1.082 0.287 2.098 0.788 2.974 2.297-3.356 5.838-5.792 9.96-6.643z M16 18v-8h-2v10h8v-2z'),
  F('M32.047 25c0-9-8-7-8-14 0-0.58-0.056-1.076-0.158-1.498-0.526-3.532-2.88-6.366-5.93-7.23 0.027-0.123 0.041-0.251 0.041-0.382 0-1.040-0.9-1.891-2-1.891s-2 0.851-2 1.891c0 0.131 0.014 0.258 0.041 0.382-3.421 0.969-5.966 4.416-6.039 8.545-0.001 0.060-0.002 0.121-0.002 0.183 0 7-8 5-8 14 0 2.382 5.331 4.375 12.468 4.878 0.673 1.263 2.002 2.122 3.532 2.122s2.86-0.86 3.532-2.122c7.137-0.503 12.468-2.495 12.468-4.878zM25.82 26.691c-1.695 0.452-3.692 0.777-5.837 0.958-0.178-2.044-1.893-3.648-3.984-3.648s-3.805 1.604-3.984 3.648c-2.144-0.18-4.142-0.506-5.837-0.958-2.332-0.622-3.447-1.318-3.855-1.691 0.408-0.372 1.523-1.068 3.855-1.691 2.712-0.724 6.199-1.122 9.82-1.122s7.109 0.398 9.82 1.122c2.332 0.622 3.447 1.318 3.855 1.691-0.408 0.372-1.523 1.068-3.855 1.691z'),
  { f: 'M10 0h12v3h-12z M14.500 3h3v4h-3z', s: 'M16 7a12 12 0 1 0 0 25a12 12 0 1 0 0-25z M16 10v9', w: 1.8 },
  F('M10 12h4v4h-4zM16 12h4v4h-4zM22 12h4v4h-4zM4 24h4v4h-4zM10 24h4v4h-4zM16 24h4v4h-4zM10 18h4v4h-4zM16 18h4v4h-4zM22 18h4v4h-4zM4 18h4v4h-4zM26 0v2h-4v-2h-14v2h-4v-2h-4v32h30v-32h-4zM28 30h-26v-22h26v22z'),
  F('M8 2h16v4h-16v-4z M30 8h-28c-1.1 0-2 0.9-2 2v10c0 1.1 0.9 2 2 2h6v8h16v-8h6c1.1 0 2-0.9 2-2v-10c0-1.1-0.9-2-2-2zM22 28h-12v-10h12v10z'),
  F('M0 4h32c1.100 0 2 0.900 2 2v20c0 1.100-0.900 2-2 2h-32c-1.100 0-2-0.900-2-2v-20c0-1.100 0.900-2 2-2z M1 7h4v4h-4z M7 7h4v4h-4z M13 7h4v4h-4z M19 7h4v4h-4z M25 7h6v4h-6z M3 13h4v4h-4z M9 13h4v4h-4z M15 13h4v4h-4z M21 13h4v4h-4z M27 13h4v4h-4z M3 19h24v4h-24z'),
  F('M0 2v22h14v4h-6v2h16v-2h-6v-4h14v-22h-32zM30 22h-28v-18h28v18z'),
  F('M6 4h20c1 0 2 1 2 2v16h4v6h-32v-6h4v-16c0-1 1-2 2-2z M6 6v16h20v-16z M12 24h8v2h-8z'),
  F('M23 0h-14c-1.65 0-3 1.35-3 3v26c0 1.65 1.35 3 3 3h14c1.65 0 3-1.35 3-3v-26c0-1.65-1.35-3-3-3zM12 1.5h8v1h-8v-1zM16 30c-1.105 0-2-0.895-2-2s0.895-2 2-2 2 0.895 2 2-0.895 2-2 2zM24 24h-16v-20h16v20z'),
  F('M25 0h-18c-1.65 0-3 1.35-3 3v26c0 1.65 1.35 3 3 3h18c1.65 0 3-1.35 3-3v-26c0-1.65-1.35-3-3-3zM16 30.500c-0.800 0-1.500-0.700-1.500-1.500s0.700-1.500 1.500-1.500 1.500 0.700 1.500 1.500-0.700 1.500-1.500 1.500zM26 26h-20v-22h20v22z'),
  // row 6, mostly hidden behind the bar
  F('M28 0h-24c-1.100 0-2 0.900-2 2v28c0 1.100 0.900 2 2 2h24c1.100 0 2-0.900 2-2v-28c0-1.100-0.900-2-2-2z M5 3h22v24h-22z'),
  F('M30 8h-12.600l6.800-6-1.200-1.600-7 6-7-6-1.200 1.600 6.800 6h-12.600c-1 0-2 1-2 2v20c0 1 1 2 2 2h28c1 0 2-1 2-2v-20c0-1-1-2-2-2z M4 12h24v16h-24z'),
  F('M26 2h-20l-6 12v14c0 1 1 2 2 2h28c1 0 2-1 2-2v-14z M8 5h16l4 8h-6l-2 4h-8l-2-4h-6z M10 8h12v1.500h-12z'),
  F('M26 2h-20l-6 12v14c0 1 1 2 2 2h28c1 0 2-1 2-2v-14z M8 5h16l4 8h-6l-2 4h-8l-2-4h-6z'),
  F('M26 2h-20l-6 6v21c0 0.55 0.45 1 1 1h30c0.55 0 1-0.45 1-1v-21l-6-6zM16 26l-10-8h6v-6h8v6h6l-10 8zM4.828 6l2-2h18.343l2 2h-22.343z'),
  F('M26 2h-20l-6 6v21c0 0.55 0.45 1 1 1h30c0.55 0 1-0.45 1-1v-21l-6-6zM20 20v6h-8v-6h-6l10-8 10 8h-6zM4.828 6l2-2h18.343l2 2h-22.343z'),
  F('M16 18l8-8h-6v-8h-4v8h-6z M21 13.500l-1 3 9.200 3.500-13.200 5-13.200-5 9.200-3.500-1-3-11 4.500v8l16 6 16-6v-8z'),
  F('M14 18h4v-8h6l-8-8-8 8h6z M21 13.500l-1 3 9.200 3.500-13.200 5-13.200-5 9.200-3.500-1-3-11 4.500v8l16 6 16-6v-8z'),
  F('M28 0h-28v32h32v-28l-4-4zM16 4h4v8h-4v-8zM28 28h-24v-24h2v10h18v-10h2.343l1.657 1.657v22.343z'),
  F('M7 1h18c1 0 2 0.700 2.300 1.500l4.700 15.500v9c0 1-1 2-2 2h-28c-1 0-2-1-2-2v-9l4.700-15.500c0.300-0.800 1.300-1.500 2.300-1.500z'),
  F('M16 0c-8.837 0-16 2.239-16 5v4c0 2.761 7.163 5 16 5s16-2.239 16-5v-4c0-2.761-7.163-5-16-5z M16 17c-8.837 0-16-2.239-16-5v6c0 2.761 7.163 5 16 5s16-2.239 16-5v-6c0 2.761-7.163 5-16 5z M16 26c-8.837 0-16-2.239-16-5v6c0 2.761 7.163 5 16 5s16-2.239 16-5v-6c0 2.761-7.163 5-16 5z'),
  F('M16 2c-4.418 0-8.418 1.791-11.313 4.687l-4.687-4.687v12h12l-4.485-4.485c2.172-2.172 5.172-3.515 8.485-3.515 6.627 0 12 5.373 12 12 0 3.584-1.572 6.801-4.063 9l2.646 3c3.322-2.932 5.417-7.221 5.417-12 0-8.837-7.163-16-16-16z'),
  F('M0 18c0 4.779 2.095 9.068 5.417 12l2.646-3c-2.491-2.199-4.063-5.416-4.063-9 0-6.627 5.373-12 12-12 3.313 0 6.313 1.343 8.485 3.515l-4.485 4.485h12v-12l-4.687 4.687c-2.895-2.896-6.895-4.687-11.313-4.687-8.837 0-16 7.163-16 16z'),
  F('M12 8v-6l-12 12 12 12v-6.500c6 0 11 1 15 8.500 0-8-2-19-15-20z'),
  F('M20 8v-6l12 12-12 12v-6.500c-6 0-11 1-15 8.500 0-8 2-19 15-20z'),
  F('M18 8v-6l12 12-12 12v-6c-8 0-12 2-16 8 0-10 6-18 16-20z'),
  F('M14 8v-6l-12 12 12 12v-6c8 0 12 2 16 8 0-10-6-18-16-20z'),
  F('M16 2c8.800 0 16 5.800 16 13s-7.200 13-16 13c-0.800 0-1.700-0.100-2.500-0.200-3.200 3.200-7 3.800-10.500 3.900v-0.800c1.900-0.900 3.500-2.600 3.700-4.500 0-0.300 0-0.500-0.100-0.800-3.900-2.400-6.600-6.300-6.600-10.600 0-7.200 7.200-13 16-13z')
]
</script>

<template>
  <div class="page">
    <div class="top-strip"></div>

    <section class="icon-set">
      <header class="set-head">
        <h2>Untitled Set</h2>
        <div class="color-bar"><span class="dark"></span><span class="pink"></span></div>
        <span class="size">32</span>
        <span class="toggle"></span>
        <span class="grip"></span>
      </header>
      <div class="glyphs">
        <div v-for="(ico, n) in selected" :key="n" class="glyph picked">
          <svg viewBox="0 0 32 32" width="32" height="32">
            <path v-if="ico.f" :d="ico.f" fill-rule="evenodd" />
            <path v-if="ico.s" :d="ico.s" class="line" :stroke-width="ico.w" />
            <rect v-if="n === 5" x="21.700" y="27" width="5.500" height="2" fill="#f28aa4" />
          </svg>
        </div>
      </div>
    </section>

    <section class="icon-set">
      <header class="set-head">
        <h2>IcoMoon - Free</h2>
        <span class="size">32</span>
        <span class="toggle"></span>
        <span class="grip"></span>
      </header>
      <div class="glyphs">
        <div v-for="(ico, n) in free" :key="n" class="glyph">
          <svg viewBox="0 0 32 32" width="32" height="32">
            <path v-if="ico.f" :d="ico.f" fill-rule="evenodd" />
            <path v-if="ico.s" :d="ico.s" class="line" :stroke-width="ico.w" />
          </svg>
        </div>
      </div>
    </section>

    <footer class="bottom-bar">
      <div class="seg seg-left">
        <svg viewBox="0 0 32 32" width="16" height="16">
          <path d="M0 2h32v28h-32z M3 5v22h26v-22z M6 24v-3l7-9 6 7 3-1 5 3v3z" fill="#000" fill-rule="evenodd" />
        </svg>
        <span>Generate SVG &amp; More</span>
      </div>
      <div class="seg seg-mid">
        <div class="seg-line"></div>
        <div class="seg-label">Selection (7)</div>
        <svg class="chev chev-l" viewBox="0 0 16 48" width="16" height="48"><path d="M15.500 0l-15 22 15 24-8.500-24z" /></svg>
        <svg class="chev chev-r" viewBox="0 0 16 48" width="16" height="48"><path d="M0.500 0l15 22-15 24 8.500-24z" /></svg>
      </div>
      <div class="seg">
        <span>Generate Font</span>
        <span class="font-f">ℱ</span>
      </div>
    </footer>

    <!-- annotations drawn on top of the screenshot -->
    <svg class="marks" viewBox="0 0 1664 783" width="1664" height="783">
      <rect x="78.500" y="58.500" width="604" height="151" class="box" />
      <rect x="1282.500" y="727.500" width="259" height="49" class="box" />
      <path d="M748 136c-2 8-3 14-3.500 24s-2.500 20-3 30-0.500 20-0.500 28" class="pen" />
      <path d="M1242.500 732.300l19.500-0.600 21 6.300 8 9-8 5-32 3-5 6 16 1 29-3" class="pen" />
      <circle cx="1315" cy="299" r="6" fill="none" stroke="#2196f3" stroke-width="3.500" />
      <path d="M1300.500 299.500v16.500l4-3.500 2.500 5.500 2.500-1-2.500-5.500h5z" fill="#fff" stroke="#111" stroke-width="1" />
    </svg>
    <div class="watermark">https://blog.csdn.net/qq_37816525</div>
  </div>
</template>

<style scoped>
.page {
  position: relative;
  width: 1664px;
  height: 783px;
  overflow: hidden;
  background: #f1f1f1;
  color: #444;
  font-family: "Roboto", "Liberation Sans", sans-serif;
}

.top-strip {
  height: 5px;
  margin-bottom: 23px;
  background: #fff;
  box-shadow: 0 1px 4px rgba(0, 0, 0, 0.22);
}

.icon-set {
  margin-bottom: 35px;
  padding-left: 98px;
}

.set-head {
  display: flex;
  align-items: flex-end;
  height: 64px;
  box-sizing: border-box;
  border-bottom: 1px solid #d6d6d6;
}

.set-head h2 {
  flex: 1;
  margin: 0 0 10px;
  font-size: 32px;
  line-height: 36px;
  font-weight: 300;
}

.color-bar {
  display: flex;
  width: 112px;
  height: 16px;
  margin: 0 24px 6px 0;
}

.dark {
  flex: 1;
  background: #3c3c3c;
}

.pink {
  flex: 1;
  background: #fb83a3;
}

.size {
  width: 17px;
  margin: 0 29px 3px 0;
  font-size: 16px;
  line-height: 20px;
  font-weight: 300;
  color: #bdbdbd;
}

.toggle {
  position: relative;
  width: 26px;
  height: 14px;
  margin: 0 26px 8px 0;
  border-radius: 7px;
  background: #875a97;
}

.toggle::after {
  content: "";
  position: absolute;
  top: 2px;
  right: 2px;
  width: 10px;
  height: 10px;
  border-radius: 50%;
  background: #fff;
}

.grip {
  flex: none;
  width: 7px;
  height: 10px;
  margin: 0 -6px 11px 0;
  background: repeating-linear-gradient(#777 0 2px, transparent 2px 4px);
}

.glyphs {
  display: grid;
  grid-template-columns: repeat(18, 72px);
  grid-auto-rows: 72px;
  gap: 12px;
  margin-top: 25px;
}

.glyph {
  display: flex;
  align-items: center;
  justify-content: center;
  box-sizing: border-box;
  border-radius: 4px;
  background: #dcdcdc;
}

.glyph.picked {
  border: 3px solid #ffb84d;
  background: #fff;
  border-radius: 5px;
}

.glyph svg {
  overflow: visible;
  fill: #444;
}

.line {
  fill: none;
  stroke: #444;
}

.bottom-bar {
  position: absolute;
  left: 0;
  right: 0;
  bottom: 0;
  display: flex;
  height: 56px;
  padding-left: 98px;
  background: rgba(255, 255, 255, 0.97);
  box-shadow: 0 -1px 3px rgba(0, 0, 0, 0.12);
  font-family: "Noto Sans", sans-serif;
  font-size: 15.5px;
  color: #333;
}

.seg {
  flex: none;
  position: relative;
  display: flex;
  align-items: center;
  justify-content: center;
  gap: 8px;
  width: 526px;
}

.seg-left {
  border-left: 1px solid #9a9a9a;
  box-sizing: border-box;
}

.seg-mid {
  flex-direction: column;
  align-items: stretch;
  gap: 0;
  padding-top: 3px;
  box-sizing: border-box;
}

.seg-line {
  height: 4px;
  background: #ffb84d;
}

.seg-label {
  flex: 1;
  display: flex;
  align-items: center;
  justify-content: center;
  padding-bottom: 7px;
}

.chev {
  position: absolute;
  top: 6px;
  fill: #c6c6c6;
}

.chev-l {
  left: -16px;
}

.chev-r {
  right: -16px;
}

.font-f {
  margin-left: 2px;
  font-family: "DejaVu Sans", serif;
  font-size: 19px;
  font-weight: 700;
  color: #000;
}

.marks {
  position: absolute;
  top: 0;
  left: 0;
  pointer-events: none;
}

.box {
  fill: none;
  stroke: #f00;
  stroke-width: 1;
}

.pen {
  fill: none;
  stroke: #f00;
  stroke-width: 3;
  stroke-linecap: round;
  stroke-linejoin: round;
}

.watermark {
  position: absolute;
  left: 1412px;
  top: 755px;
  font-family: "Liberation Sans", sans-serif;
  font-size: 15px;
  line-height: 20px;
  color: rgba(140, 140, 140, 0.5);
  white-space: nowrap;
}
</style>

<style>
html,
body {
  margin: 0;
  overflow: hidden;
  background: #f1f1f1;
}
</style>
